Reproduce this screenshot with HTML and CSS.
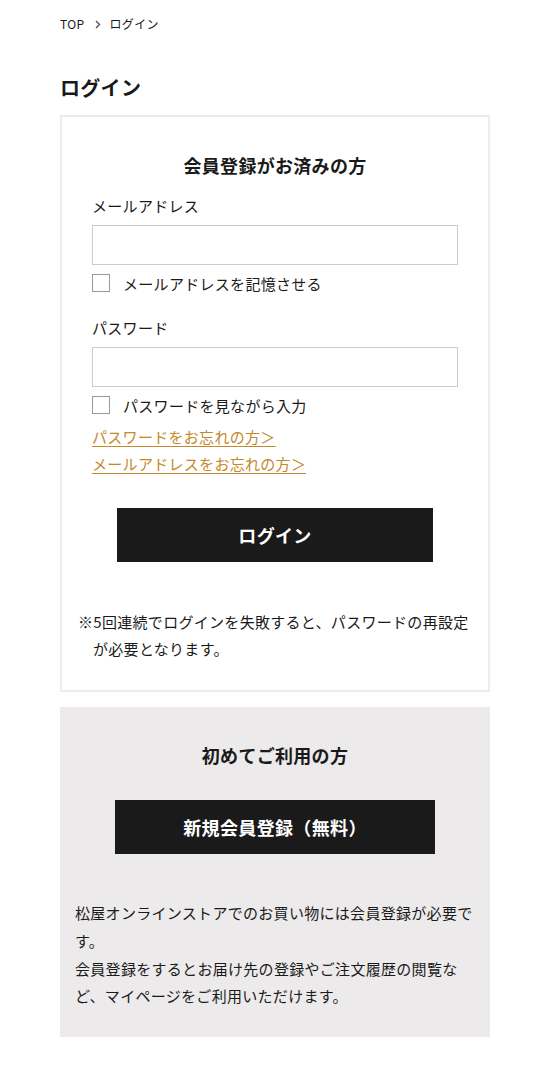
FILE: index.html
```html
<!DOCTYPE html>
<html lang="ja">
<head>
<meta charset="utf-8">
<title>ログイン</title>
<link rel="stylesheet" href="styles.css">
</head>
<body>
<div class="page">
  <nav class="breadcrumb">
    <a class="crumb" href="#">TOP</a>
    <svg class="chev" width="6" height="9" viewBox="0 0 6 9"><path d="M1 1l3.5 3.5L1 8" fill="none" stroke="#555" stroke-width="1.4"/></svg>
    <span class="crumb">ログイン</span>
  </nav>

  <h1 class="page-title">ログイン</h1>

  <section class="card card-login">
    <h2 class="card-heading">会員登録がお済みの方</h2>
    <div class="form">
      <label class="field-label">メールアドレス</label>
      <input class="text-input" type="text">
      <label class="check-row"><span class="checkbox"></span><span>メールアドレスを記憶させる</span></label>

      <label class="field-label field-label-second">パスワード</label>
      <input class="text-input" type="password">
      <label class="check-row"><span class="checkbox"></span><span>パスワードを見ながら入力</span></label>

      <div class="links">
        <a class="text-link" href="#">パスワードをお忘れの方＞</a>
        <a class="text-link" href="#">メールアドレスをお忘れの方＞</a>
      </div>
    </div>
    <button class="btn btn-login">ログイン</button>
    <p class="note">※5回連続でログインを失敗すると、パスワードの再設定が必要となります。</p>
  </section>

  <section class="card card-register">
    <h2 class="card-heading">初めてご利用の方</h2>
    <button class="btn btn-register">新規会員登録（無料）</button>
    <p class="desc">松屋オンラインストアでのお買い物には会員登録が必要です。<br>会員登録をするとお届け先の登録やご注文履歴の閲覧など、マイページをご利用いただけます。</p>
  </section>
</div>
</body>
</html>
```

FILE: styles.css
```css
* { box-sizing: border-box; }
html, body { margin: 0; padding: 0; background: #fff; }
body {
  font-family: "Noto Sans CJK JP", "Noto Sans", sans-serif;
  color: #1a1a1a;
  font-size: 15px;
  letter-spacing: 0.02em;
}
.page { padding: 0 60px 40px; }

.breadcrumb {
  display: flex;
  align-items: center;
  padding-top: 15px;
  height: 33px;
  font-size: 12px;
  line-height: 18px;
  letter-spacing: 0.03em;
}
.crumb { color: #1a1a1a; text-decoration: none; }
.chev { margin: 0 8px 0 11px; }

.page-title {
  margin: 40px 0 12px;
  font-size: 20px;
  line-height: 30px;
  font-weight: 700;
}

.card { width: 430px; }
.card-login {
  border: 2px solid #ececec;
  padding: 35px 16px 28px;
}
.card-heading {
  margin: 0;
  text-align: center;
  font-size: 18px;
  line-height: 26px;
  font-weight: 700;
}
.form {
  display: flex;
  flex-direction: column;
  padding: 0 14px;
  margin-top: 16px;
}
.field-label {
  font-size: 15px;
  line-height: 24px;
  margin-bottom: 7px;
}
.field-label-second { margin-top: 24px; }
.text-input {
  display: block;
  width: 100%;
  height: 40px;
  border: 1px solid #cccccc;
  border-radius: 0;
  padding: 0 10px;
  font: inherit;
  background: #fff;
  outline: none;
}
.check-row {
  display: flex;
  align-items: center;
  margin-top: 9px;
  height: 18px;
  line-height: 18px;
  font-size: 15px;
}
.check-row span:last-child { position: relative; top: 1px; }
.checkbox {
  width: 18px;
  height: 18px;
  border: 1px solid #9a9a9a;
  background: #fff;
  margin-right: 13px;
  flex: none;
}
.links {
  display: flex;
  flex-direction: column;
  align-items: flex-start;
  margin-top: 9px;
}
.text-link {
  color: #c5882c;
  text-decoration: underline;
  text-underline-offset: 3px;
  font-size: 15px;
  line-height: 27px;
}

.btn {
  display: block;
  height: 54px;
  border: 0;
  border-radius: 0;
  background: #1a1a1a;
  color: #fff;
  font-family: inherit;
  font-size: 18px;
  font-weight: 700;
  letter-spacing: 0.02em;
  cursor: pointer;
}
.btn-login { width: 316px; margin: 31px auto 0; }
.btn-register { width: 320px; margin: 32px auto 0; }

.note {
  margin: 46px 0 0;
  padding-left: 15px;
  text-indent: -15px;
  font-size: 15px;
  line-height: 27px;
}

.card-register {
  margin-top: 15px;
  background: #eceaea;
  padding: 35px 15px 27px;
}
.desc {
  margin: 45px 0 0;
  font-size: 15px;
  line-height: 27.75px;
}
```
